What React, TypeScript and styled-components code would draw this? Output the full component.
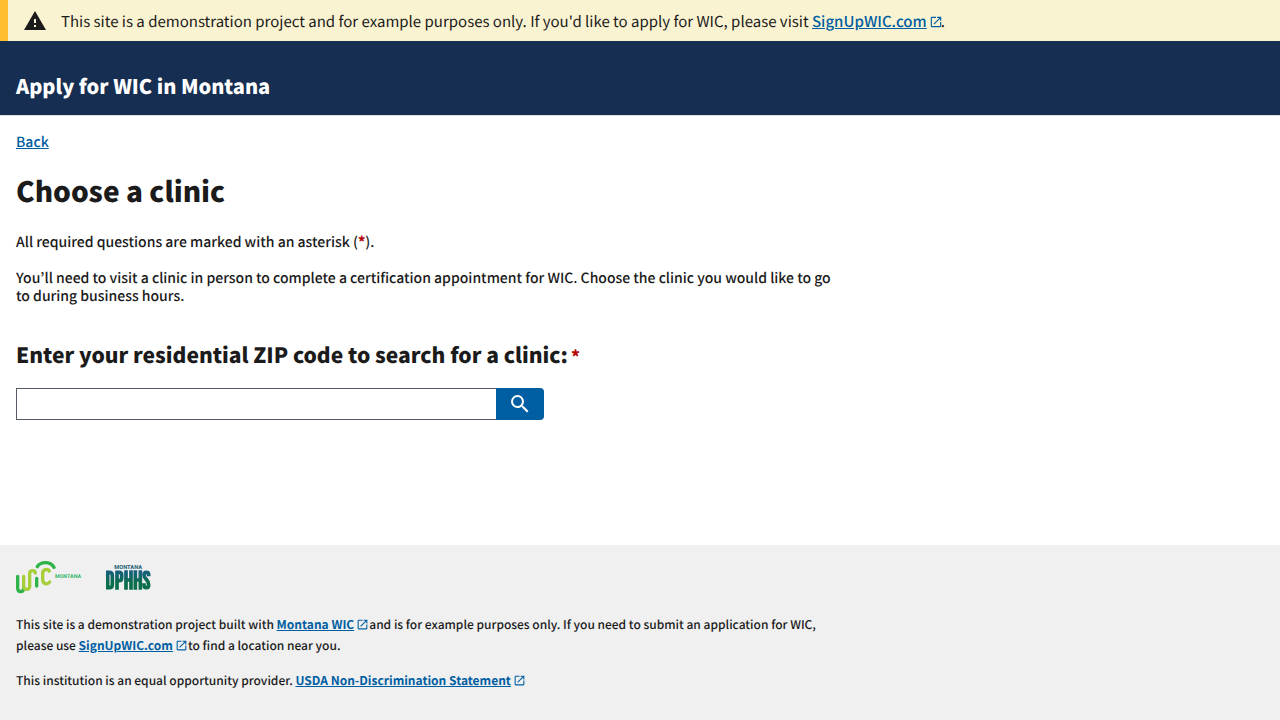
import React from "react";
import styled, { createGlobalStyle } from "styled-components";

const GlobalStyle = createGlobalStyle`
  *, *::before, *::after { box-sizing: border-box; }
  body {
    margin: 0;
    background: #fff;
    color: #1b1b1b;
    font-family: "Noto Sans CJK KR", "Noto Sans", sans-serif;
    font-size: 14px;
    font-weight: 500;
    line-height: 18px;
    text-rendering: geometricPrecision;
  }
  h1, h2, p { margin: 0; }
`;

const Page = styled.div`
  display: flex;
  flex-direction: column;
  min-height: 100vh;
`;

const Banner = styled.aside`
  display: flex;
  align-items: center;
  gap: 10px;
  padding: 9px 16px 7px 11px;
  border-left: 8px solid #ffbe2e;
  background: #faf3d1;
  font-size: 15px;
  font-weight: 400;
  line-height: 25px;
`;

const WarningIcon = styled.svg`
  flex: none;
  width: 32px;
  height: 24px;
  fill: currentColor;
`;

const Header = styled.header`
  padding: 32px 16px 16px;
  background: #162e51;
  border-bottom: 1px solid #dfe1e2;
  color: #fff;
`;

const SiteTitle = styled.div`
  font-size: 20px;
  font-weight: 900;
  line-height: 26px;
`;

const Main = styled.main`
  flex: 1;
  display: flex;
  flex-direction: column;
  align-items: flex-start;
  padding: 17px 16px 32px;
`;

const Link = styled.a<{ $strong?: boolean }>`
  color: #005ea2;
  font-weight: ${(p) => (p.$strong ? 700 : 500)};
  text-decoration: underline;
`;

const ExternalGlyph = styled.svg<{ $size: number }>`
  width: ${(p) => p.$size}px;
  height: ${(p) => p.$size}px;
  margin: 0 -2px 0 2px;
  vertical-align: -2px;
  fill: #005ea2;
`;

const PageHeading = styled.h1`
  margin-top: 20px;
  font-size: 28px;
  font-weight: 900;
  line-height: 40px;
`;

const Paragraph = styled.p`
  max-width: 816px;
  margin-top: 18px;
`;

const Intro = styled.div`
  margin-top: 4px;
`;

const Required = styled.abbr`
  color: #b50909;
  font-weight: 900;
  text-decoration: none;
`;

const SearchHeading = styled.h2`
  margin-top: 36px;
  font-size: 21px;
  font-weight: 900;
  line-height: 28px;

  ${Required} {
    margin-left: 3px;
    font-size: 17px;
  }
`;

const SearchForm = styled.form`
  display: flex;
  width: 100%;
  max-width: 528px;
  height: 32px;
  margin-top: 18px;
`;

const SearchInput = styled.input`
  flex: 1;
  min-width: 0;
  padding: 0 8px;
  border: 1px solid #565c65;
  border-right: 0;
  border-radius: 0;
  background: #fff;
  font: inherit;
`;

const SearchButton = styled.button`
  display: flex;
  align-items: center;
  justify-content: center;
  width: 48px;
  padding: 0;
  border: 0;
  border-radius: 0 4px 4px 0;
  background: #005ea2;
  color: #fff;
  cursor: pointer;

  svg {
    width: 24px;
    height: 24px;
    fill: currentColor;
  }
`;

const Footer = styled.footer`
  padding: 16px 16px 29px;
  background: #f0f0f0;
  font-size: 12px;
  line-height: 21px;
`;

const Logos = styled.div`
  display: flex;
  align-items: center;
  gap: 24px;
  margin-bottom: 20px;

  svg {
    display: block;
    height: 33px;
  }
`;

const FooterText = styled.p`
  max-width: 816px;

  & + & {
    margin-top: 14px;
  }

  ${ExternalGlyph} {
    margin-right: 0;
  }
`;

function External({ size }: { size: number }) {
  return (
    <ExternalGlyph $size={size} viewBox="0 0 24 24" aria-hidden="true">
      <path d="M19 19H5V5h7V3H5a2 2 0 0 0-2 2v14a2 2 0 0 0 2 2h14c1.100 0 2-.9 2-2v-7h-2v7zM14 3v2h3.590l-9.830 9.830 1.410 1.410L19 6.410V10h2V3h-7z" />
    </ExternalGlyph>
  );
}

function WicLogo() {
  return (
    <svg width="66" viewBox="48 32 198 99" role="img" aria-label="Montana WIC">
      <g fill="none" strokeLinecap="round" strokeLinejoin="round" strokeWidth="10">
        <path stroke="#2fb34a" d="M53 78V113Q53 124 62 124Q71 124 71 114" />
        <path stroke="#a6ce39" d="M71 78V108Q71 117 80 117Q89 117 89 108V70Q89 61 98 61Q105 61 106 68" />
        <path stroke="#2fb34a" d="M110 84V107" />
        <path stroke="#a6ce39" d="M148 62C143 54 128 57 128 70V87C128 102 142 104 149 95" />
        <path stroke="#2fb34a" d="M112 49C122 33 151 32 162 51" />
      </g>
      <text x="165" y="84" fill="#35b66a" fontSize="16" fontWeight="700" fontFamily="Roboto, sans-serif">MONTANA</text>
    </svg>
  );
}

function DphhsLogo() {
  return (
    <svg width="46" viewBox="319 42 138 99" role="img" aria-label="Montana DPHHS">
      <defs>
        <linearGradient id="dphhs" gradientUnits="userSpaceOnUse" x1="0" y1="68" x2="0" y2="128">
          <stop offset="0.100" stopColor="#15607c" />
          <stop offset="0.700" stopColor="#0b6e4a" />
        </linearGradient>
      </defs>
      <text x="344" y="66" fill="#1d6078" fontSize="17" fontWeight="700" fontFamily="Roboto, sans-serif">MONTANA</text>
      <g fill="none" stroke="url(#dphhs)" strokeWidth="11">
        <path d="M324 76V122H329Q338 122 338 113V85Q338 76 329 76Z" />
        <path d="M352 128V76H359Q366 76 366 84V93Q366 101 359 101H352" />
        <path d="M379 70V128M394 70V128M379 99H394" />
        <path d="M407 70V128M422 70V128M407 99H422" />
        <path d="M447 88V83Q447 76 440 76Q433 76 433 84Q433 90 440 97Q447 104 447 114Q447 122 440 122Q433 122 433 114V109" />
      </g>
    </svg>
  );
}

export default function App() {
  return (
    <Page>
      <GlobalStyle />
      <Banner>
        <WarningIcon viewBox="0 0 32 24" aria-hidden="true">
          <path d="M5 20h22L16 1 5 20zm12-3h-2v-2h2v2zm0-4h-2V9h2v4z" />
        </WarningIcon>
        <p>
          This site is a demonstration project and for example purposes only. If you'd like to apply for WIC, please visit{" "}
          <Link href="#signup">SignUpWIC.com</Link>
          <External size={14} />.
        </p>
      </Banner>
      <Header>
        <SiteTitle>Apply for WIC in Montana</SiteTitle>
      </Header>
      <Main>
        <Link href="#back">Back</Link>
        <PageHeading>Choose a clinic</PageHeading>
        <Intro>
          <Paragraph>
            All required questions are marked with an asterisk (<Required>*</Required>).
          </Paragraph>
          <Paragraph>
            You’ll need to visit a clinic in person to complete a certification appointment for WIC. Choose the clinic
            you would like to go to during business hours.
          </Paragraph>
        </Intro>
        <SearchHeading>
          <label htmlFor="zip">Enter your residential ZIP code to search for a clinic:</label>
          <Required>*</Required>
        </SearchHeading>
        <SearchForm role="search" onSubmit={(e) => e.preventDefault()}>
          <SearchInput id="zip" type="text" inputMode="numeric" required />
          <SearchButton type="submit" aria-label="Search">
            <svg viewBox="0 0 24 24" aria-hidden="true">
              <path d="M15.500 14h-.79l-.28-.27A6.470 6.470 0 0 0 16 9.500 6.500 6.500 0 1 0 9.500 16c1.610 0 3.090-.59 4.230-1.570l.27.28v.79l5 4.990L20.490 19l-4.990-5zm-6 0C7.010 14 5 11.990 5 9.500S7.010 5 9.500 5 14 7.010 14 9.500 11.990 14 9.500 14z" />
            </svg>
          </SearchButton>
        </SearchForm>
      </Main>
      <Footer>
        <Logos>
          <WicLogo />
          <DphhsLogo />
        </Logos>
        <FooterText>
          This site is a demonstration project built with{" "}
          <Link $strong href="#montana-wic">Montana WIC</Link>
          <External size={13} />
          and is for example purposes only. If you need to submit an application for WIC, please use{" "}
          <Link $strong href="#signup">SignUpWIC.com</Link>
          <External size={13} />
          to find a location near you.
        </FooterText>
        <FooterText>
          This institution is an equal opportunity provider.{" "}
          <Link $strong href="#usda">USDA Non-Discrimination Statement</Link>
          <External size={13} />
        </FooterText>
      </Footer>
    </Page>
  );
}
